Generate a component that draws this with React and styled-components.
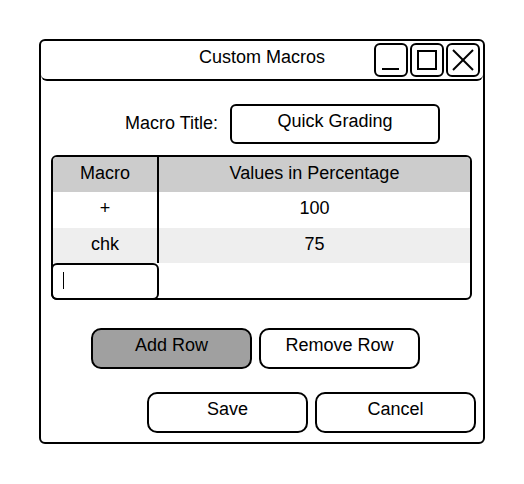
import React from "react";
import styled, { createGlobalStyle } from "styled-components";

const Global = createGlobalStyle`
  html, body { margin: 0; padding: 0; background: #fff; }
  body { font-family: "Liberation Sans", Arial, sans-serif; color: #000; }
`;

const Page = styled.div`
  width: 524px;
  height: 484px;
  box-sizing: border-box;
  padding: 39px 0 0 39px;
`;

const Window = styled.div`
  width: 446px;
  height: 405px;
  box-sizing: border-box;
  border: 2px solid #000;
  border-radius: 6px;
  display: flex;
  flex-direction: column;
`;

const TitleBar = styled.div`
  height: 40px;
  flex: none;
  box-sizing: border-box;
  border-bottom: 2px solid #000;
  border-radius: 0 0 6px 6px;
  display: grid;
  grid-template-columns: 1fr auto 1fr;
  align-items: start;
`;

const Title = styled.div`
  grid-column: 2;
  font-size: 18px;
  line-height: 20px;
  padding-top: 6px;
`;

const Controls = styled.div`
  grid-column: 3;
  justify-self: end;
  display: flex;
  gap: 2px;
  padding: 2px 3px 0 0;
`;

const CtrlBox = styled.div`
  width: 34px;
  height: 34px;
  box-sizing: border-box;
  border: 2px solid #000;
  border-radius: 6px;
  display: flex;
  align-items: center;
  justify-content: center;
`;

const Body = styled.div`
  display: flex;
  flex-direction: column;
  padding: 23px 11px 0 10px;
`;

const TitleRow = styled.div`
  display: flex;
  align-items: center;
  padding-left: 74px;
  gap: 12px;
`;

const Label = styled.div`
  font-size: 18px;
  padding-bottom: 2px;
`;

const Field = styled.div`
  width: 210px;
  height: 40px;
  box-sizing: border-box;
  border: 2px solid #000;
  border-radius: 6px;
  display: flex;
  align-items: center;
  justify-content: center;
  font-size: 18px;
  padding-bottom: 5px;
`;

const Table = styled.div`
  margin-top: 11px;
  box-sizing: border-box;
  border: 2px solid #000;
  border-radius: 6px;
  display: grid;
  grid-template-columns: 106px 1fr;
  grid-template-rows: 35px 36px 35px 35px;
  height: 145px;
`;

const Cell = styled.div`
  display: flex;
  align-items: center;
  justify-content: center;
  font-size: 18px;
  padding-bottom: 3px;
  box-sizing: border-box;
  background: ${(p) => p.$bg || "transparent"};
  border-right: ${(p) => (p.$first ? "2px solid #000" : "none")};
  border-radius: ${(p) => p.$radius || "0"};
`;

const EntryCell = styled.div`
  margin: 0 0 -2px -2px;
  box-sizing: border-box;
  border: 2px solid #000;
  border-radius: 6px;
  display: flex;
  align-items: center;
  padding-left: 10px;
  position: relative;
  z-index: 1;
`;

const Caret = styled.span`
  display: block;
  width: 1px;
  height: 17px;
  background: #000;
  margin-bottom: 2px;
`;

const ButtonRow = styled.div`
  display: flex;
  gap: 7px;
  margin-top: ${(p) => p.$top}px;
  padding-left: ${(p) => p.$left}px;
`;

const Button = styled.div`
  flex: none;
  width: 161px;
  height: 41px;
  box-sizing: border-box;
  border: 2px solid #000;
  border-radius: 10px;
  background: ${(p) => (p.$primary ? "#a0a0a0" : "#fff")};
  display: flex;
  align-items: center;
  justify-content: center;
  font-size: 18px;
  padding-bottom: 6px;
`;

const Icon = ({ kind }) => (
  <svg width="30" height="30" viewBox="0 0 30 30" fill="none" stroke="#000" strokeWidth="2">
    {kind === "min" && <line x1="6" y1="24" x2="23" y2="24" />}
    {kind === "max" && <rect x="6" y="6" width="18" height="18" />}
    {kind === "close" && (
      <>
        <line x1="5" y1="5" x2="25" y2="25" />
        <line x1="25" y1="5" x2="5" y2="25" />
      </>
    )}
  </svg>
);

export default function App() {
  return (
    <>
      <Global />
      <Page>
        <Window>
          <TitleBar>
            <Title>Custom Macros</Title>
            <Controls>
              <CtrlBox><Icon kind="min" /></CtrlBox>
              <CtrlBox><Icon kind="max" /></CtrlBox>
              <CtrlBox><Icon kind="close" /></CtrlBox>
            </Controls>
          </TitleBar>
          <Body>
            <TitleRow>
              <Label>Macro Title:</Label>
              <Field>Quick Grading</Field>
            </TitleRow>
            <Table>
              <Cell $first $bg="#cccccc" $radius="4px 0 0 0">Macro</Cell>
              <Cell $bg="#cccccc" $radius="0 4px 0 0">Values in Percentage</Cell>
              <Cell $first>+</Cell>
              <Cell>100</Cell>
              <Cell $first $bg="#eeeeee">chk</Cell>
              <Cell $bg="#eeeeee">75</Cell>
              <EntryCell><Caret /></EntryCell>
              <Cell />
            </Table>
            <ButtonRow $top={28} $left={40}>
              <Button $primary>Add Row</Button>
              <Button>Remove Row</Button>
            </ButtonRow>
            <ButtonRow $top={23} $left={96}>
              <Button>Save</Button>
              <Button>Cancel</Button>
            </ButtonRow>
          </Body>
        </Window>
      </Page>
    </>
  );
}
